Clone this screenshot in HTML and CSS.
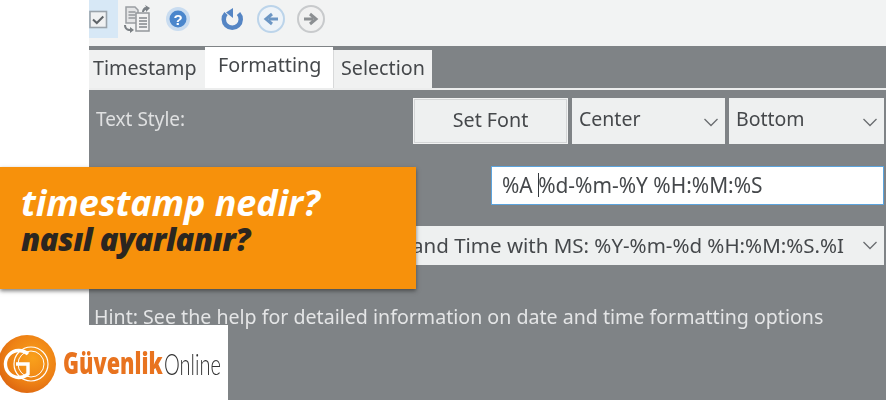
FILE: index.html
```html
<!DOCTYPE html>
<html lang="tr">
<head>
<meta charset="utf-8">
<title>timestamp nedir?</title>
<link rel="stylesheet" href="styles.css">
</head>
<body>
<main class="app">
  <div class="toolbar">
    <span class="tool tool-active">
      <svg width="19" height="19" viewBox="0 0 19 19"><rect x="1" y="1.500" width="16.500" height="16" fill="#f0f1f2" stroke="#9aa3ab" stroke-width="1.600"/><path d="M4 9.500l3.800 3.500 6.500-6.500" fill="none" stroke="#5f6468" stroke-width="2"/></svg>
    </span>
    <span class="tool tool-docs">
      <svg width="30" height="30" viewBox="0 0 30 30"><path d="M3 3h9l3 3v13H3z" fill="#e4e5e6" stroke="#9b9fa3" stroke-width="1.500"/><path d="M5.500 8h7M5.500 11h7M5.500 14h7" stroke="#94989c" stroke-width="1.500"/><path d="M13 9h13v18H13z" fill="#f3f3f3" stroke="#94989c" stroke-width="1.500"/><path d="M16 14h8M16 17h8M16 20h8M16 23h8" stroke="#84888c" stroke-width="1.500"/><path d="M19 8c0-3 2-5 4-5l-1-2 5 3-4 4v-2c-1 0-2 1-2 2z" fill="#7b8186"/><path d="M3 21c0 3 2 4 4 4v-2l4 3-4 3v-2c-3 0-6-2-6-6z" fill="#7b8084"/></svg>
    </span>
    <span class="tool tool-help">
      <svg width="26" height="26" viewBox="0 0 26 26"><circle cx="13" cy="13" r="12" fill="#c9dcf0"/><circle cx="13" cy="13" r="8.500" fill="#4a86cc"/><text x="13" y="18.500" text-anchor="middle" class="help-mark">?</text></svg>
    </span>
    <span class="tool tool-undo">
      <svg width="24" height="24" viewBox="0 0 24 24"><path d="M6 6.500a8.500 8.500 0 1 0 12.500 0" fill="none" stroke="#5585c4" stroke-width="4.500"/><path d="M13 1v10L6 5.500z" fill="#5585c4"/></svg>
    </span>
    <span class="tool tool-back">
      <svg width="30" height="30" viewBox="0 0 30 30"><circle cx="15" cy="15" r="13" fill="#eef3f8" stroke="#bcd4ea" stroke-width="2"/><path d="M22 15h-9M16 10l-6 5 6 5" fill="none" stroke="#6c96c4" stroke-width="3"/></svg>
    </span>
    <span class="tool tool-forward">
      <svg width="30" height="30" viewBox="0 0 30 30"><circle cx="15" cy="15" r="13" fill="#f1f1f1" stroke="#c8cacc" stroke-width="2"/><path d="M8 15h9M14 10l6 5-6 5" fill="none" stroke="#8c8f92" stroke-width="3"/></svg>
    </span>
  </div>

  <div class="tabs">
    <span class="tab tab-timestamp">Timestamp</span>
    <span class="tab tab-formatting">Formatting</span>
    <span class="tab tab-selection">Selection</span>
  </div>

  <section class="panel">
    <div class="row row-style">
      <span class="label">Text Style:</span>
      <button class="btn-font" type="button">Set Font</button>
      <span class="select select-center">Center<svg class="chev" width="16" height="9" viewBox="0 0 16 9"><path d="M1.500 1l6.500 6.500L14.500 1" fill="none" stroke="#6a6d70" stroke-width="1.300"/></svg></span>
      <span class="select select-bottom">Bottom<svg class="chev" width="16" height="9" viewBox="0 0 16 9"><path d="M1.500 1l6.500 6.500L14.500 1" fill="none" stroke="#6a6d70" stroke-width="1.300"/></svg></span>
    </div>
    <div class="row row-format">
      <div class="input"><span>%A </span><i class="caret"></i><span>%d-%m-%Y %H:%M:%S</span></div>
    </div>
    <div class="row row-preset">
      <span class="select select-preset"><span class="preset-text">and Time with MS: %Y-%m-%d %H:%M:%S.%I</span><svg class="chev" width="16" height="9" viewBox="0 0 16 9"><path d="M1.500 1l6.500 6.500L14.500 1" fill="none" stroke="#6a6d70" stroke-width="1.300"/></svg></span>
    </div>
    <p class="hint">Hint: See the help for detailed information on date and time formatting options</p>
  </section>
</main>

<div class="banner">
  <div class="banner-title">timestamp nedir?</div>
  <div class="banner-sub">nasıl ayarlanır?</div>
</div>

<div class="logo">
  <svg class="logo-mark" width="58" height="60" viewBox="0 0 58 60">
    <defs>
      <radialGradient id="logoGrad" cx="0.600" cy="0.400" r="0.700">
        <stop offset="0" stop-color="#f9a11b"/>
        <stop offset="0.600" stop-color="#ee8215"/>
        <stop offset="1" stop-color="#d9600f"/>
      </radialGradient>
    </defs>
    <circle cx="28" cy="30" r="29" fill="url(#logoGrad)"/>
    <path d="M29 20a13.500 13.500 0 1 0 0 20V30H17" fill="none" stroke="#fff" stroke-width="3.400"/>
    <circle cx="32" cy="30" r="17" fill="none" stroke="#fff" stroke-width="1.200"/>
    <circle cx="32" cy="30" r="13" fill="none" stroke="#fff" stroke-width="1"/>
  </svg>
  <span class="logo-guvenlik">Güvenlik</span>
  <span class="logo-online">Online</span>
</div>
</body>
</html>
```

FILE: styles.css
```css
* { box-sizing: border-box; }

html, body {
  margin: 0;
  height: 400px;
  overflow: hidden;
  background: #fff;
}

body {
  position: relative;
  font-family: "Noto Sans", "Open Sans", sans-serif;
}

.app {
  margin-left: 89px;
  height: 400px;
  display: flex;
  flex-direction: column;
  background: #7f8386;
  filter: blur(0.6px);
}

/* toolbar */
.toolbar {
  height: 46px;
  background: #f2f3f3;
  display: flex;
  align-items: flex-start;
}

.tool {
  display: flex;
  align-items: center;
  justify-content: center;
  height: 38px;
  width: 30px;
  flex: none;
}

.tool-active {
  width: 29px;
  justify-content: flex-start;
  background: #d7e8f6;
}

.tool-docs { width: 40px; }
.tool-help { width: 40px; }
.tool-undo { margin-left: 19px; }
.tool-back { margin-left: 9px; }
.tool-forward { margin-left: 10px; }

.help-mark {
  font: 700 15px "Liberation Sans", sans-serif;
  fill: #fff;
}

/* tabs */
.tabs {
  height: 42px;
  display: flex;
  align-items: flex-end;
}

.tab {
  display: flex;
  align-items: center;
  height: 38px;
  padding-bottom: 4px;
  font-size: 19.700px;
  color: #45484b;
  background: #f0f1f1;
}

.tab-timestamp { width: 116px; padding-left: 4px; }

.tab-formatting {
  width: 128px;
  height: 41px;
  padding: 0 0 6px 13px;
  background: #fff;
}

.tab-selection {
  width: 99px;
  padding-left: 7px;
  border-left: 1px solid #d8d9da;
}

/* panel */
.panel {
  flex: 1;
  padding: 8px 2px 0 7px;
  border-top: 2px solid #eceded;
  color: #45484b;
  font-size: 19.700px;
}

.row { display: flex; }

.row-style {
  height: 46px;
  gap: 4px;
}

.label {
  flex: 1;
  padding-top: 8px;
  color: #dfe0e1;
  font-size: 19px;
}

.btn-font {
  width: 155px;
  height: 46px;
  padding: 0 0 3px;
  font: inherit;
  color: #45484b;
  background: #eef0f0;
  border: 2px solid #d4d6d7;
  outline: 1px solid #f2f3f3;
  outline-offset: -1px;
}

.select {
  position: relative;
  display: flex;
  align-items: center;
  background: #eef0f0;
}

.select-center,
.select-bottom {
  width: 153px;
  height: 46px;
  padding: 0 0 6px 7px;
  font-size: 19.500px;
}

.select-bottom { width: 155px; }

.chev {
  position: absolute;
  right: 6px;
  top: 20px;
}

.row-format {
  margin-top: 22px;
  justify-content: flex-end;
}

.input {
  width: 393px;
  height: 39px;
  padding: 0 0 2px 10px;
  display: flex;
  align-items: center;
  background: #fff;
  border: 1px solid #5ca4dd;
  white-space: pre;
  font-size: 20.900px;
}

.caret {
  width: 1px;
  height: 24px;
  margin: 0 -1px 0 0;
  background: #33383c;
}

.row-preset {
  margin-top: 21px;
  justify-content: flex-end;
}

.select-preset {
  width: 472px;
  height: 39px;
  padding-bottom: 2px;
  justify-content: flex-end;
  white-space: nowrap;
  font-size: 20.500px;
}

.preset-text { margin-right: 40px; }

.select-preset .chev { top: 15px; }

.hint {
  margin: 38px 0 0 -2px;
  color: #e4e5e6;
  font-size: 19.600px;
}

/* orange banner */
.banner {
  position: absolute;
  left: 0;
  top: 167px;
  width: 416px;
  height: 122px;
  padding: 15px 0 0 21px;
  background: #f7910b;
  box-shadow: 0 2px 4px rgba(40, 40, 40, 0.600);
  font-family: "Open Sans", sans-serif;
  font-style: italic;
  font-weight: 700;
}

.banner-title {
  font-size: 36px;
  line-height: 42px;
  color: #fff;
  letter-spacing: -0.100px;
}

.banner-sub {
  font-size: 31px;
  line-height: 30px;
  color: #2b2620;
  letter-spacing: -0.500px;
  font-weight: 800;
}

/* logo */
.logo {
  position: absolute;
  left: 0;
  top: 325px;
  width: 228px;
  height: 75px;
  background: #fff;
  overflow: hidden;
  filter: blur(0.3px);
}

.logo-mark {
  position: absolute;
  left: -1px;
  top: 9px;
}

.logo-guvenlik {
  position: absolute;
  left: 63px;
  top: 18px;
  font: 800 30px/40px "Open Sans", sans-serif;
  color: #e8731f;
  transform: scaleX(0.72);
  transform-origin: left center;
}

.logo-online {
  position: absolute;
  left: 164px;
  top: 19px;
  font: 300 29px/40px "Lato", sans-serif;
  color: #333;
  transform: scaleX(0.69);
  transform-origin: left center;
}
```
